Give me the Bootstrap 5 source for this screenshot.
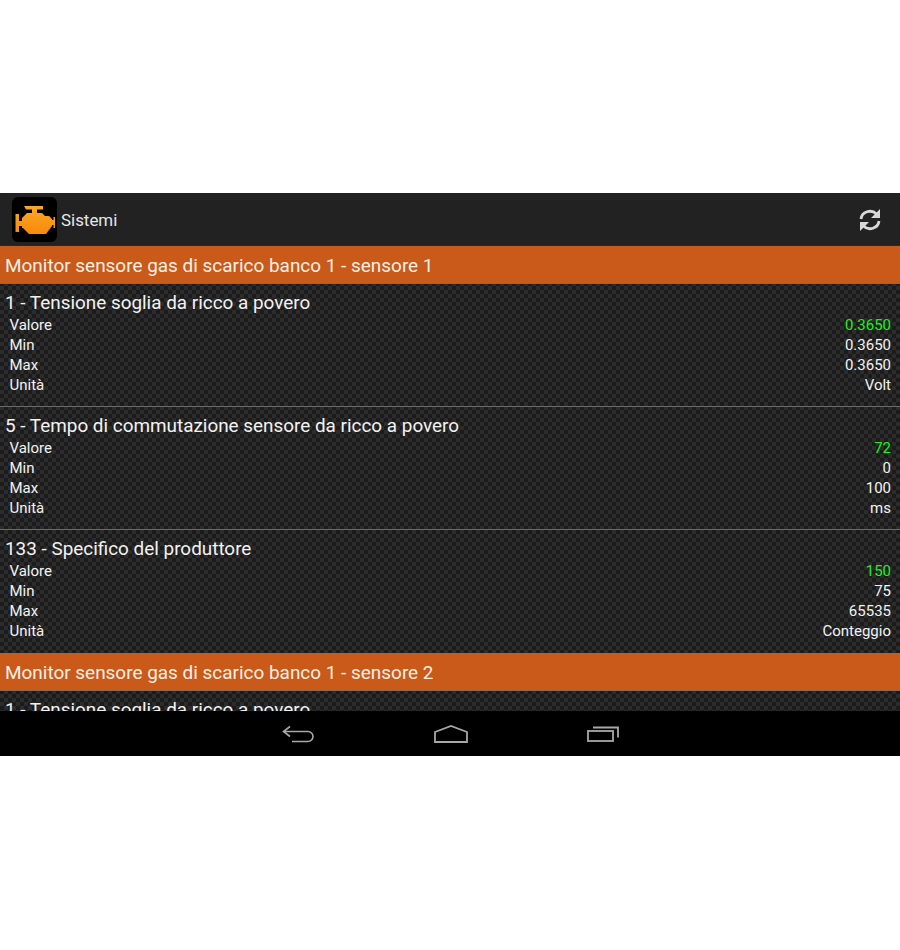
<!DOCTYPE html>
<html lang="it">
<head>
<meta charset="utf-8">
<title>Sistemi</title>
<link href="https://cdn.jsdelivr.net/npm/bootstrap@5.3.0/dist/css/bootstrap.min.css" rel="stylesheet">
<style>
html,body{height:100%;background:#fff;}
body{font-family:Roboto,"Liberation Sans",sans-serif;color:#f2f2f2;padding-top:193px;}
.tablet{height:563px;background:#000;}
.actionbar{height:53px;background:#222222;border-bottom:1px solid #1d2b30;padding-left:12px;padding-right:18px;}
.applogo{width:45px;height:45px;background:#000;border-radius:6px;margin-top:1px;}
.apptitle{font-size:16.9px;margin-left:4px;margin-top:3px;color:#e6e6e6;}
.refreshicon{margin-top:2px;}
.viewport{height:465px;overflow:hidden;background-color:#2c2c2c;background-image:linear-gradient(45deg,#1b1b1b 25%,transparent 25%,transparent 75%,#1b1b1b 75%),linear-gradient(45deg,#1b1b1b 25%,transparent 25%,transparent 75%,#1b1b1b 75%);background-size:8px 8px;background-position:0 0,4px 4px;}
.sectionbar{height:38px;background:#c95a19;border-bottom:1px solid #8a6a55;font-size:18.95px;line-height:39px;padding-left:5px;color:#f7efe8;}
.sensor{padding:6px 9px 11px 5px;border-bottom:1px solid #6b6b6b;}
.sensor.lastone{border-bottom:0;padding-bottom:12px;}
.sensorname{font-size:18.9px;line-height:26px;height:25px;white-space:nowrap;}
.datarow{font-size:15px;line-height:20px;height:20px;padding-left:4.500px;}
.greenval{color:#22ee22;}
.softkeys{height:45px;background:#000;padding-left:282px;padding-right:281px;}
.softkeys svg{display:block;}
</style>
</head>
<body>
<div class="tablet d-flex flex-column">
  <div class="actionbar d-flex align-items-center flex-shrink-0">
    <div class="applogo d-flex align-items-center justify-content-center flex-shrink-0">
      <svg width="41" height="28" viewBox="0 0 41 28"><defs><linearGradient id="eg" x1="0" y1="0" x2="0" y2="1"><stop offset="0" stop-color="#ffa726"/><stop offset="1" stop-color="#f58a0c"/></linearGradient></defs><path fill="url(#eg)" d="M10 0h19v3.500h-6v3.500h5l3 3h4l3 3v1h1.500v-3h2.500v11h-2.500v-3h-1.500v1l-6 8h-17l-6-6h-1v-2h-3v6h-3.500v-18h3.500v7h3v-3l5-5h5v-3.500h-6z"/></svg>
    </div>
    <span class="apptitle">Sistemi</span>
    <svg class="ms-auto refreshicon" width="24" height="24" viewBox="0 0 24 24" fill="none" stroke="#d8d8d8" stroke-width="2.800"><path d="M3 11a9 8.500 0 0 1 15.500-5"/><path d="M21 13a9 8.500 0 0 1-15.500 5"/><path fill="#d8d8d8" stroke="none" d="M22 1v9h-9zM2 23v-9h9z"/></svg>
  </div>
  <div class="viewport flex-shrink-0">
    <div class="sectionbar">Monitor sensore gas di scarico banco 1 - sensore 1</div>
    <div class="sensor">
      <div class="sensorname">1 - Tensione soglia da ricco a povero</div>
      <div class="datarow d-flex justify-content-between"><span>Valore</span><span class="greenval">0.3650</span></div>
      <div class="datarow d-flex justify-content-between"><span>Min</span><span>0.3650</span></div>
      <div class="datarow d-flex justify-content-between"><span>Max</span><span>0.3650</span></div>
      <div class="datarow d-flex justify-content-between"><span>Unità</span><span>Volt</span></div>
    </div>
    <div class="sensor">
      <div class="sensorname">5 - Tempo di commutazione sensore da ricco a povero</div>
      <div class="datarow d-flex justify-content-between"><span>Valore</span><span class="greenval">72</span></div>
      <div class="datarow d-flex justify-content-between"><span>Min</span><span>0</span></div>
      <div class="datarow d-flex justify-content-between"><span>Max</span><span>100</span></div>
      <div class="datarow d-flex justify-content-between"><span>Unità</span><span>ms</span></div>
    </div>
    <div class="sensor lastone">
      <div class="sensorname">133 - Specifico del produttore</div>
      <div class="datarow d-flex justify-content-between"><span>Valore</span><span class="greenval">150</span></div>
      <div class="datarow d-flex justify-content-between"><span>Min</span><span>75</span></div>
      <div class="datarow d-flex justify-content-between"><span>Max</span><span>65535</span></div>
      <div class="datarow d-flex justify-content-between"><span>Unità</span><span>Conteggio</span></div>
    </div>
    <div class="sectionbar">Monitor sensore gas di scarico banco 1 - sensore 2</div>
    <div class="sensor">
      <div class="sensorname">1 - Tensione soglia da ricco a povero</div>
    </div>
  </div>
  <div class="softkeys d-flex align-items-center justify-content-between flex-shrink-0">
    <svg width="32" height="18" viewBox="0 0 32 18" fill="none" stroke="#a8a8a8" stroke-width="1.600"><path d="M8 1.500 1.500 6.500 8 11.500"/><path d="M2 6.500h24a4.500 4.500 0 0 1 0 10h-16"/></svg>
    <svg width="34" height="18" viewBox="0 0 34 18" fill="none" stroke="#a8a8a8" stroke-width="1.800"><path d="M1 7 17 1l16 6v10H1z"/></svg>
    <svg width="32" height="16" viewBox="0 0 32 16" fill="none" stroke="#a8a8a8" stroke-width="1.800"><rect x="1" y="5" width="25" height="10"/><path d="M6 1.500h25v10"/></svg>
  </div>
</div>
</body>
</html>
